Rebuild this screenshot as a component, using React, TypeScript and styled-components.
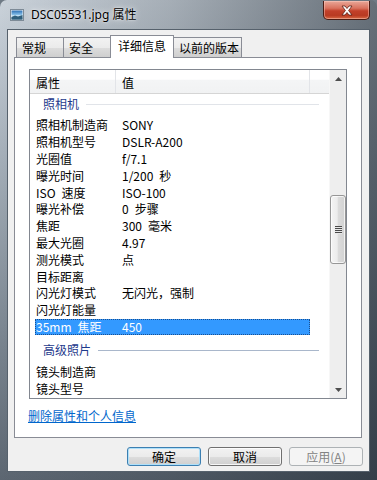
import * as React from 'react';
import styled, { createGlobalStyle } from 'styled-components';

const uiFont = `"Noto Sans CJK SC", "Noto Sans", sans-serif`;

const GlobalStyle = createGlobalStyle`
    html, body {
        margin: 0;
        padding: 0;
    }
    body {
        width: 377px;
        height: 480px;
        overflow: hidden;
        background: #6f7a85;
    }
`;

const Window = styled.div`
    width: 377px;
    height: 480px;
    box-sizing: border-box;
    padding: 0 7px 8px 7px;
    display: flex;
    flex-direction: column;
    border-radius: 7px 7px 0 0;
    background:
        linear-gradient(to right, rgba(255, 255, 255, 0) 0%, rgba(20, 30, 40, 0.2) 45%, rgba(20, 30, 40, 0.55) 100%),
        linear-gradient(to bottom, #cad2da 0%, #a7b1bb 30%, #7a8590 70%, #5c6671 100%);
    font-family: ${uiFont};
    font-size: 12px;
    color: #000;
`;

const TitleBar = styled.div`
    height: 29px;
    display: flex;
    align-items: flex-start;
`;

const TitleIcon = styled.svg`
    margin: 9px 0 0 3px;
    flex: none;
`;

const TitleText = styled.span`
    margin: 7px 0 0 7px;
    font-family: "Noto Sans", "Noto Sans CJK SC", sans-serif;
    font-size: 12px;
    line-height: 16px;
    color: #000;
    text-shadow: 0 0 6px rgba(255, 255, 255, 0.9), 0 0 2px rgba(255, 255, 255, 0.8);
`;

const CloseButton = styled.div`
    margin-left: auto;
    margin-top: 1px;
    width: 47px;
    height: 19px;
    box-sizing: border-box;
    border: 1px solid #4a1c14;
    border-top: none;
    border-radius: 0 0 5px 5px;
    background: linear-gradient(to bottom, #e9a899 0%, #d9725e 40%, #c2402a 55%, #b93a22 80%, #d86a45 100%);
    box-shadow: inset 0 0 0 1px rgba(255, 210, 200, 0.45);
    display: flex;
    align-items: center;
    justify-content: center;
`;

const Client = styled.div`
    flex: 1;
    display: flex;
    flex-direction: column;
    padding: 5px 7px 5px 6px;
    background: #f0f0f0;
    border: 1px solid #56616c;
`;

const TabStrip = styled.div`
    height: 23px;
    display: flex;
    align-items: flex-end;
    padding-left: 2px;
    margin-bottom: -1px;
    position: relative;
    z-index: 1;
`;

const Tab = styled.div<{ $w: number; $active?: boolean }>`
    box-sizing: border-box;
    width: ${(p) => p.$w}px;
    height: ${(p) => (p.$active ? 23 : 21)}px;
    margin-right: -1px;
    padding-left: ${(p) => (p.$active ? 7 : 5)}px;
    border: 1px solid #898c95;
    border-bottom: ${(p) => (p.$active ? 'none' : '1px solid #898c95')};
    background: ${(p) => (p.$active ? '#fff' : 'linear-gradient(to bottom, #f2f2f2 0%, #ebebeb 50%, #dddddd 51%, #cfcfcf 100%)')};
    position: relative;
    z-index: ${(p) => (p.$active ? 2 : 1)};
    font-size: 12px;
    line-height: ${(p) => (p.$active ? 20 : 19)}px;
    white-space: nowrap;
`;

const Panel = styled.div`
    flex: 1;
    display: flex;
    flex-direction: column;
    padding: 11px 14px 0 14px;
    background: #fff;
    border: 1px solid #898c95;
`;

const ListBox = styled.div`
    width: 318px;
    height: 330px;
    box-sizing: border-box;
    border: 1px solid #828790;
    display: flex;
`;

const ListMain = styled.div`
    flex: 1;
    overflow: hidden;
    display: flex;
    flex-direction: column;
`;

const Header = styled.div`
    height: 24px;
    box-sizing: border-box;
    display: flex;
    border-bottom: 1px solid #d5d5d5;
    background: linear-gradient(to bottom, #ffffff 0%, #ffffff 40%, #f4f5f6 45%, #f1f2f3 100%);
`;

const HeaderCell = styled.div<{ $w: number }>`
    width: ${(p) => p.$w}px;
    box-sizing: border-box;
    padding: 5px 0 0 6px;
    border-right: 1px solid #e2e4e8;
    line-height: 16px;
`;

const GroupRow = styled.div<{ $gap: number }>`
    height: 23px;
    margin-top: ${(p) => p.$gap}px;
    padding: 0 10px 3px 13px;
    box-sizing: border-box;
    display: flex;
    align-items: center;
`;

const GroupTitle = styled.span`
    color: #1e3a8c;
    line-height: 16px;
`;

const GroupLine = styled.div<{ $strong?: boolean }>`
    flex: 1;
    height: 1px;
    margin-left: 7px;
    background: ${(p) => (p.$strong ? '#a9b7cb' : '#e1e4e9')};
`;

const ItemRow = styled.div<{ $selected?: boolean }>`
    height: 16.8px;
    width: 275px;
    margin-left: 5px;
    box-sizing: border-box;
    display: flex;
    align-items: center;
    background: ${(p) => (p.$selected ? '#3399ff' : 'transparent')};
    color: ${(p) => (p.$selected ? '#fff' : '#000')};
    outline: ${(p) => (p.$selected ? '1px dotted #1a4f8f' : 'none')};
    outline-offset: -1px;
    line-height: 16px;
    white-space: nowrap;
`;

const Label = styled.span`
    width: 81px;
    padding-left: 1px;
    box-sizing: border-box;
    flex: none;
`;

const Value = styled.span`
    padding-left: 6px;
`;

const ScrollBar = styled.div`
    width: 17px;
    display: flex;
    flex-direction: column;
    background: #eeeeee;
    border-left: 1px solid #f7f7f7;
    box-sizing: border-box;
`;

const ScrollArrow = styled.div`
    height: 17px;
    display: flex;
    align-items: center;
    justify-content: center;
    flex: none;
`;

const Track = styled.div`
    flex: 1;
    display: flex;
    flex-direction: column;
`;

const Thumb = styled.div<{ $top: number; $h: number }>`
    margin: ${(p) => p.$top}px 0 0 0;
    height: ${(p) => p.$h}px;
    width: 16px;
    box-sizing: border-box;
    border: 1px solid #969696;
    border-radius: 3px;
    background: linear-gradient(to right, #f4f4f4 0%, #ececec 45%, #dcdcdc 50%, #d2d2d2 100%);
    box-shadow: inset 0 0 0 1px rgba(255, 255, 255, 0.7);
    display: flex;
    align-items: center;
    justify-content: center;
`;

const Grip = styled.div`
    width: 7px;
    height: 8px;
    background: repeating-linear-gradient(to bottom, #4a4a4a 0px, #4a4a4a 1px, #e8e8e8 1px, #e8e8e8 2px);
`;

const RemoveLink = styled.a`
    margin: 10px 0 0 -1px;
    align-self: flex-start;
    color: #0066cc;
    text-decoration: underline;
    line-height: 14px;
    cursor: pointer;
`;

const ButtonRow = styled.div`
    height: 19px;
    margin: 9px -1px 0 0;
    display: flex;
    justify-content: flex-end;
    gap: 7px;
`;

const Button = styled.button<{ $kind?: 'default' | 'normal' | 'disabled' }>`
    width: 74px;
    height: 19px;
    padding: 0;
    box-sizing: border-box;
    border-radius: 3px;
    font-family: ${uiFont};
    font-size: 12px;
    line-height: 16px;
    border: 1px solid
        ${(p) => (p.$kind === 'default' ? '#3c7fb1' : p.$kind === 'disabled' ? '#adb2b5' : '#707070')};
    color: ${(p) => (p.$kind === 'disabled' ? '#838383' : '#000')};
    background: ${(p) =>
        p.$kind === 'disabled'
            ? '#f4f4f4'
            : 'linear-gradient(to bottom, #f2f2f2 0%, #ebebeb 50%, #dddddd 51%, #cfcfcf 100%)'};
    box-shadow: ${(p) =>
        p.$kind === 'default'
            ? 'inset 0 0 0 1px #aee0fa'
            : p.$kind === 'disabled'
            ? 'none'
            : 'inset 0 0 0 1px rgba(255, 255, 255, 0.8)'};
`;

interface Item {
    label: string;
    value: string;
    selected?: boolean;
}

interface Group {
    title: string;
    strong?: boolean;
    gap: number;
    items: Item[];
}

// en spaces stand in for the half-width spaces of the original bitmap font
const groups: Group[] = [
    {
        title: '照相机',
        gap: 0,
        items: [
            { label: '照相机制造商', value: 'SONY' },
            { label: '照相机型号', value: 'DSLR-A200' },
            { label: '光圈值', value: 'f/7.1' },
            { label: '曝光时间', value: '1/200\u2002秒' },
            { label: 'ISO\u2002速度', value: 'ISO-100' },
            { label: '曝光补偿', value: '0\u2002步骤' },
            { label: '焦距', value: '300\u2002毫米' },
            { label: '最大光圈', value: '4.97' },
            { label: '测光模式', value: '点' },
            { label: '目标距离', value: '' },
            { label: '闪光灯模式', value: '无闪光，强制' },
            { label: '闪光灯能量', value: '' },
            { label: '35mm\u2002焦距', value: '450', selected: true },
        ],
    },
    {
        title: '高级照片',
        strong: true,
        gap: 5,
        items: [
            { label: '镜头制造商', value: '' },
            { label: '镜头型号', value: '' },
        ],
    },
];

const tabs = [
    { name: '常规', w: 48 },
    { name: '安全', w: 48 },
    { name: '详细信息', w: 64, active: true },
    { name: '以前的版本', w: 69 },
];

const PictureIcon = () => (
    <TitleIcon width="14" height="12" viewBox="0 0 14 12">
        <defs>
            <linearGradient id="sky" x1="0" y1="0" x2="0" y2="1">
                <stop offset="0" stopColor="#2b6fb3" />
                <stop offset="0.5" stopColor="#8cc4ec" />
                <stop offset="0.6" stopColor="#e8f4fb" />
                <stop offset="1" stopColor="#3f6f8f" />
            </linearGradient>
        </defs>
        <rect x="0.5" y="0.5" width="13" height="11" fill="#f4f4f4" stroke="#7d8a96" />
        <rect x="1.5" y="1.5" width="11" height="9" fill="url(#sky)" />
        <path d="M1.5 8 L5 6.5 L8 7.5 L12.5 6 L12.5 10.5 L1.5 10.5 Z" fill="#2f5f7c" />
    </TitleIcon>
);

const CloseGlyph = () => (
    <svg width="14" height="11" viewBox="0 0 14 11">
        <path
            d="M2 1 L5 1 L7 3.5 L9 1 L12 1 L8.6 5.5 L12 10 L9 10 L7 7.5 L5 10 L2 10 L5.4 5.5 Z"
            fill="#fff"
            stroke="#5a1e14"
            strokeWidth="0.8"
            strokeLinejoin="round"
        />
    </svg>
);

const Arrow = ({ up }: { up?: boolean }) => (
    <svg width="7" height="4" viewBox="0 0 7 4">
        <path d={up ? 'M0 4 L3.5 0 L7 4 Z' : 'M0 0 L3.5 4 L7 0 Z'} fill="#4d4d4d" />
    </svg>
);

const App: React.FC = () => {
    return (
        <>
            <GlobalStyle />
            <Window>
                <TitleBar>
                    <PictureIcon />
                    <TitleText>DSC05531.jpg 属性</TitleText>
                    <CloseButton>
                        <CloseGlyph />
                    </CloseButton>
                </TitleBar>
                <Client>
                    <TabStrip>
                        {tabs.map((t) => (
                            <Tab key={t.name} $w={t.w} $active={t.active}>
                                {t.name}
                            </Tab>
                        ))}
                    </TabStrip>
                    <Panel>
                        <ListBox>
                            <ListMain>
                                <Header>
                                    <HeaderCell $w={86}>属性</HeaderCell>
                                    <HeaderCell $w={194}>值</HeaderCell>
                                </Header>
                                {groups.map((g) => (
                                    <React.Fragment key={g.title}>
                                        <GroupRow $gap={g.gap}>
                                            <GroupTitle>{g.title}</GroupTitle>
                                            <GroupLine $strong={g.strong} />
                                        </GroupRow>
                                        {g.items.map((it) => (
                                            <ItemRow key={it.label} $selected={it.selected}>
                                                <Label>{it.label}</Label>
                                                <Value>{it.value}</Value>
                                            </ItemRow>
                                        ))}
                                    </React.Fragment>
                                ))}
                            </ListMain>
                            <ScrollBar>
                                <ScrollArrow>
                                    <Arrow up />
                                </ScrollArrow>
                                <Track>
                                    <Thumb $top={108} $h={69}>
                                        <Grip />
                                    </Thumb>
                                </Track>
                                <ScrollArrow>
                                    <Arrow />
                                </ScrollArrow>
                            </ScrollBar>
                        </ListBox>
                        <RemoveLink>删除属性和个人信息</RemoveLink>
                    </Panel>
                    <ButtonRow>
                        <Button $kind="default">确定</Button>
                        <Button $kind="normal">取消</Button>
                        <Button $kind="disabled">
                            应用(<u>A</u>)
                        </Button>
                    </ButtonRow>
                </Client>
            </Window>
        </>
    );
};

export default App;
